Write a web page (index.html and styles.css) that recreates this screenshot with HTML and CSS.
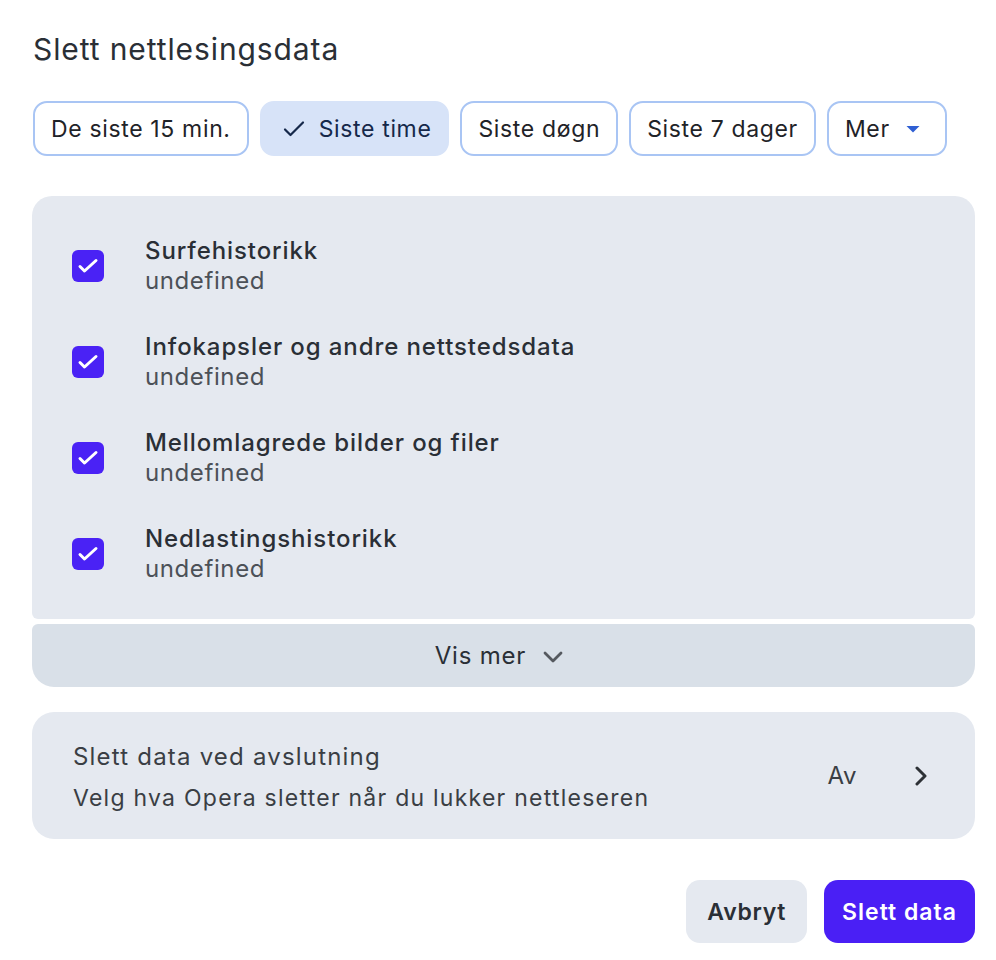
FILE: index.html
```html
<!DOCTYPE html>
<html lang="no">
<head>
<meta charset="utf-8">
<title>Slett nettlesingsdata</title>
<link rel="stylesheet" href="styles.css">
</head>
<body>
<div class="dialog">
  <h1 class="title">Slett nettlesingsdata</h1>
  <div class="chips">
    <button class="chip">De siste 15 min.</button>
    <button class="chip selected"><svg class="check" width="22" height="18" viewBox="0 0 22 18"><path d="M2 9.5l5.5 5.5L20 2.5" fill="none" stroke="currentColor" stroke-width="2.2" stroke-linecap="round" stroke-linejoin="round"/></svg>Siste time</button>
    <button class="chip">Siste døgn</button>
    <button class="chip">Siste 7 dager</button>
    <button class="chip more">Mer<svg class="caret" width="14" height="8" viewBox="0 0 14 8"><path d="M0.5 1h13L7 7.5z" fill="#2f5fd3"/></svg></button>
  </div>

  <div class="panel">
    <div class="item">
      <span class="box"><svg width="32" height="32" viewBox="0 0 32 32"><path d="M8 16.5l4.5 4.5L24 10.5" fill="none" stroke="#fff" stroke-width="3" stroke-linecap="round" stroke-linejoin="round"/></svg></span>
      <div class="texts"><div class="name">Surfehistorikk</div><div class="sub">undefined</div></div>
    </div>
    <div class="item">
      <span class="box"><svg width="32" height="32" viewBox="0 0 32 32"><path d="M8 16.5l4.5 4.5L24 10.5" fill="none" stroke="#fff" stroke-width="3" stroke-linecap="round" stroke-linejoin="round"/></svg></span>
      <div class="texts"><div class="name">Infokapsler og andre nettstedsdata</div><div class="sub">undefined</div></div>
    </div>
    <div class="item">
      <span class="box"><svg width="32" height="32" viewBox="0 0 32 32"><path d="M8 16.5l4.5 4.5L24 10.5" fill="none" stroke="#fff" stroke-width="3" stroke-linecap="round" stroke-linejoin="round"/></svg></span>
      <div class="texts"><div class="name">Mellomlagrede bilder og filer</div><div class="sub">undefined</div></div>
    </div>
    <div class="item">
      <span class="box"><svg width="32" height="32" viewBox="0 0 32 32"><path d="M8 16.5l4.5 4.5L24 10.5" fill="none" stroke="#fff" stroke-width="3" stroke-linecap="round" stroke-linejoin="round"/></svg></span>
      <div class="texts"><div class="name">Nedlastingshistorikk</div><div class="sub">undefined</div></div>
    </div>
  </div>
  <div class="more-bar">Vis mer<svg class="down" width="20" height="12" viewBox="0 0 20 12"><path d="M2 2l8 8 8-8" fill="none" stroke="#55595f" stroke-width="2.8" stroke-linecap="round" stroke-linejoin="round"/></svg></div>

  <div class="onexit">
    <div class="onexit-texts">
      <div class="onexit-title">Slett data ved avslutning</div>
      <div class="onexit-sub">Velg hva Opera sletter når du lukker nettleseren</div>
    </div>
    <span class="state">Av</span>
    <svg class="right" width="12" height="20" viewBox="0 0 12 20"><path d="M2 2l8 8-8 8" fill="none" stroke="#2d3136" stroke-width="3" stroke-linecap="round" stroke-linejoin="round"/></svg>
  </div>

  <div class="actions">
    <button class="btn cancel">Avbryt</button>
    <button class="btn primary">Slett data</button>
  </div>
</div>
</body>
</html>
```
FILE: styles.css
```css
* { box-sizing: border-box; }
html, body { margin: 0; background: #fff; }
body {
  font-family: Inter, "Noto Sans", "Liberation Sans", sans-serif;
  color: #2a2f36;
}
.dialog {
  padding: 29px 21px 0 32px;
}
.title {
  margin: 0 0 0 1px;
  font-size: 30px;
  font-weight: 400;
  letter-spacing: 0.9px;
  line-height: 40px;
  color: #2a2f36;
}
.chips {
  display: flex;
  gap: 11px;
  margin-top: 32px;
  margin-left: 1px;
}
.chip {
  font-family: inherit;
  height: 55px;
  padding: 0 16px;
  border: 2px solid #a9c5f4;
  border-radius: 14px;
  background: #fff;
  font-size: 23px;
  letter-spacing: 0.65px;
  color: #1f2328;
  display: flex;
  align-items: center;
}
.chip.selected {
  background: #d7e3f8;
  border-color: #d7e3f8;
  color: #15284a;
  padding: 0 16px 0 21px;
}
.chip .check { margin-right: 14px; }
.chip.more { padding-right: 25px; }
.chip .caret { margin-left: 16px; }

.panel {
  margin-top: 40px;
  background: #e5e9f0;
  border-radius: 20px 20px 6px 6px;
  padding: 22px 40px 17px;
}
.item {
  display: flex;
  align-items: center;
  padding: 18px 0;
}
.box {
  width: 32px;
  height: 32px;
  border-radius: 6px;
  background: #4a22f5;
  display: flex;
  align-items: center;
  justify-content: center;
  flex: none;
}
.texts { margin-left: 41px; }
.name {
  font-size: 24px;
  font-weight: 500;
  letter-spacing: 0.9px;
  line-height: 30px;
  color: #2a2f36;
}
.sub {
  font-size: 24px;
  letter-spacing: 0.6px;
  line-height: 30px;
  color: #4c5158;
}
.more-bar {
  margin-top: 5px;
  height: 63px;
  background: #d9e0e8;
  border-radius: 6px 6px 22px 22px;
  display: flex;
  align-items: center;
  justify-content: center;
  font-size: 24px;
  letter-spacing: 0.8px;
  color: #2a2f36;
  padding-right: 9px;
}
.more-bar .down { margin-left: 17px; margin-top: 3px; }

.onexit {
  margin-top: 25px;
  height: 127px;
  background: #e5e9f0;
  border-radius: 22px;
  display: flex;
  align-items: center;
  padding: 4px 48px 0 41px;
}
.onexit-texts { flex: 1; }
.onexit-title {
  font-size: 24px;
  letter-spacing: 1.2px;
  line-height: 30px;
  color: #3a3e44;
}
.onexit-sub {
  margin-top: 11px;
  font-size: 23px;
  letter-spacing: 1.25px;
  line-height: 30px;
  color: #3a3e44;
}
.state {
  font-size: 24px;
  letter-spacing: 0.6px;
  color: #3a3e44;
  margin-right: 58px;
  margin-top: -4px;
}
.right { margin-top: -4px; }
.actions {
  display: flex;
  justify-content: flex-end;
  gap: 17px;
  margin-top: 41px;
}
.btn {
  font-family: inherit;
  height: 63px;
  border: none;
  border-radius: 14px;
  font-size: 23px;
  font-weight: 600;
  letter-spacing: 0.7px;
  padding: 0 21px;
}
.btn.cancel { background: #e5e9f0; color: #2a2f36; }
.btn.primary { background: #4a1ff5; color: #fff; padding: 0 18px; letter-spacing: 1px; }
```
